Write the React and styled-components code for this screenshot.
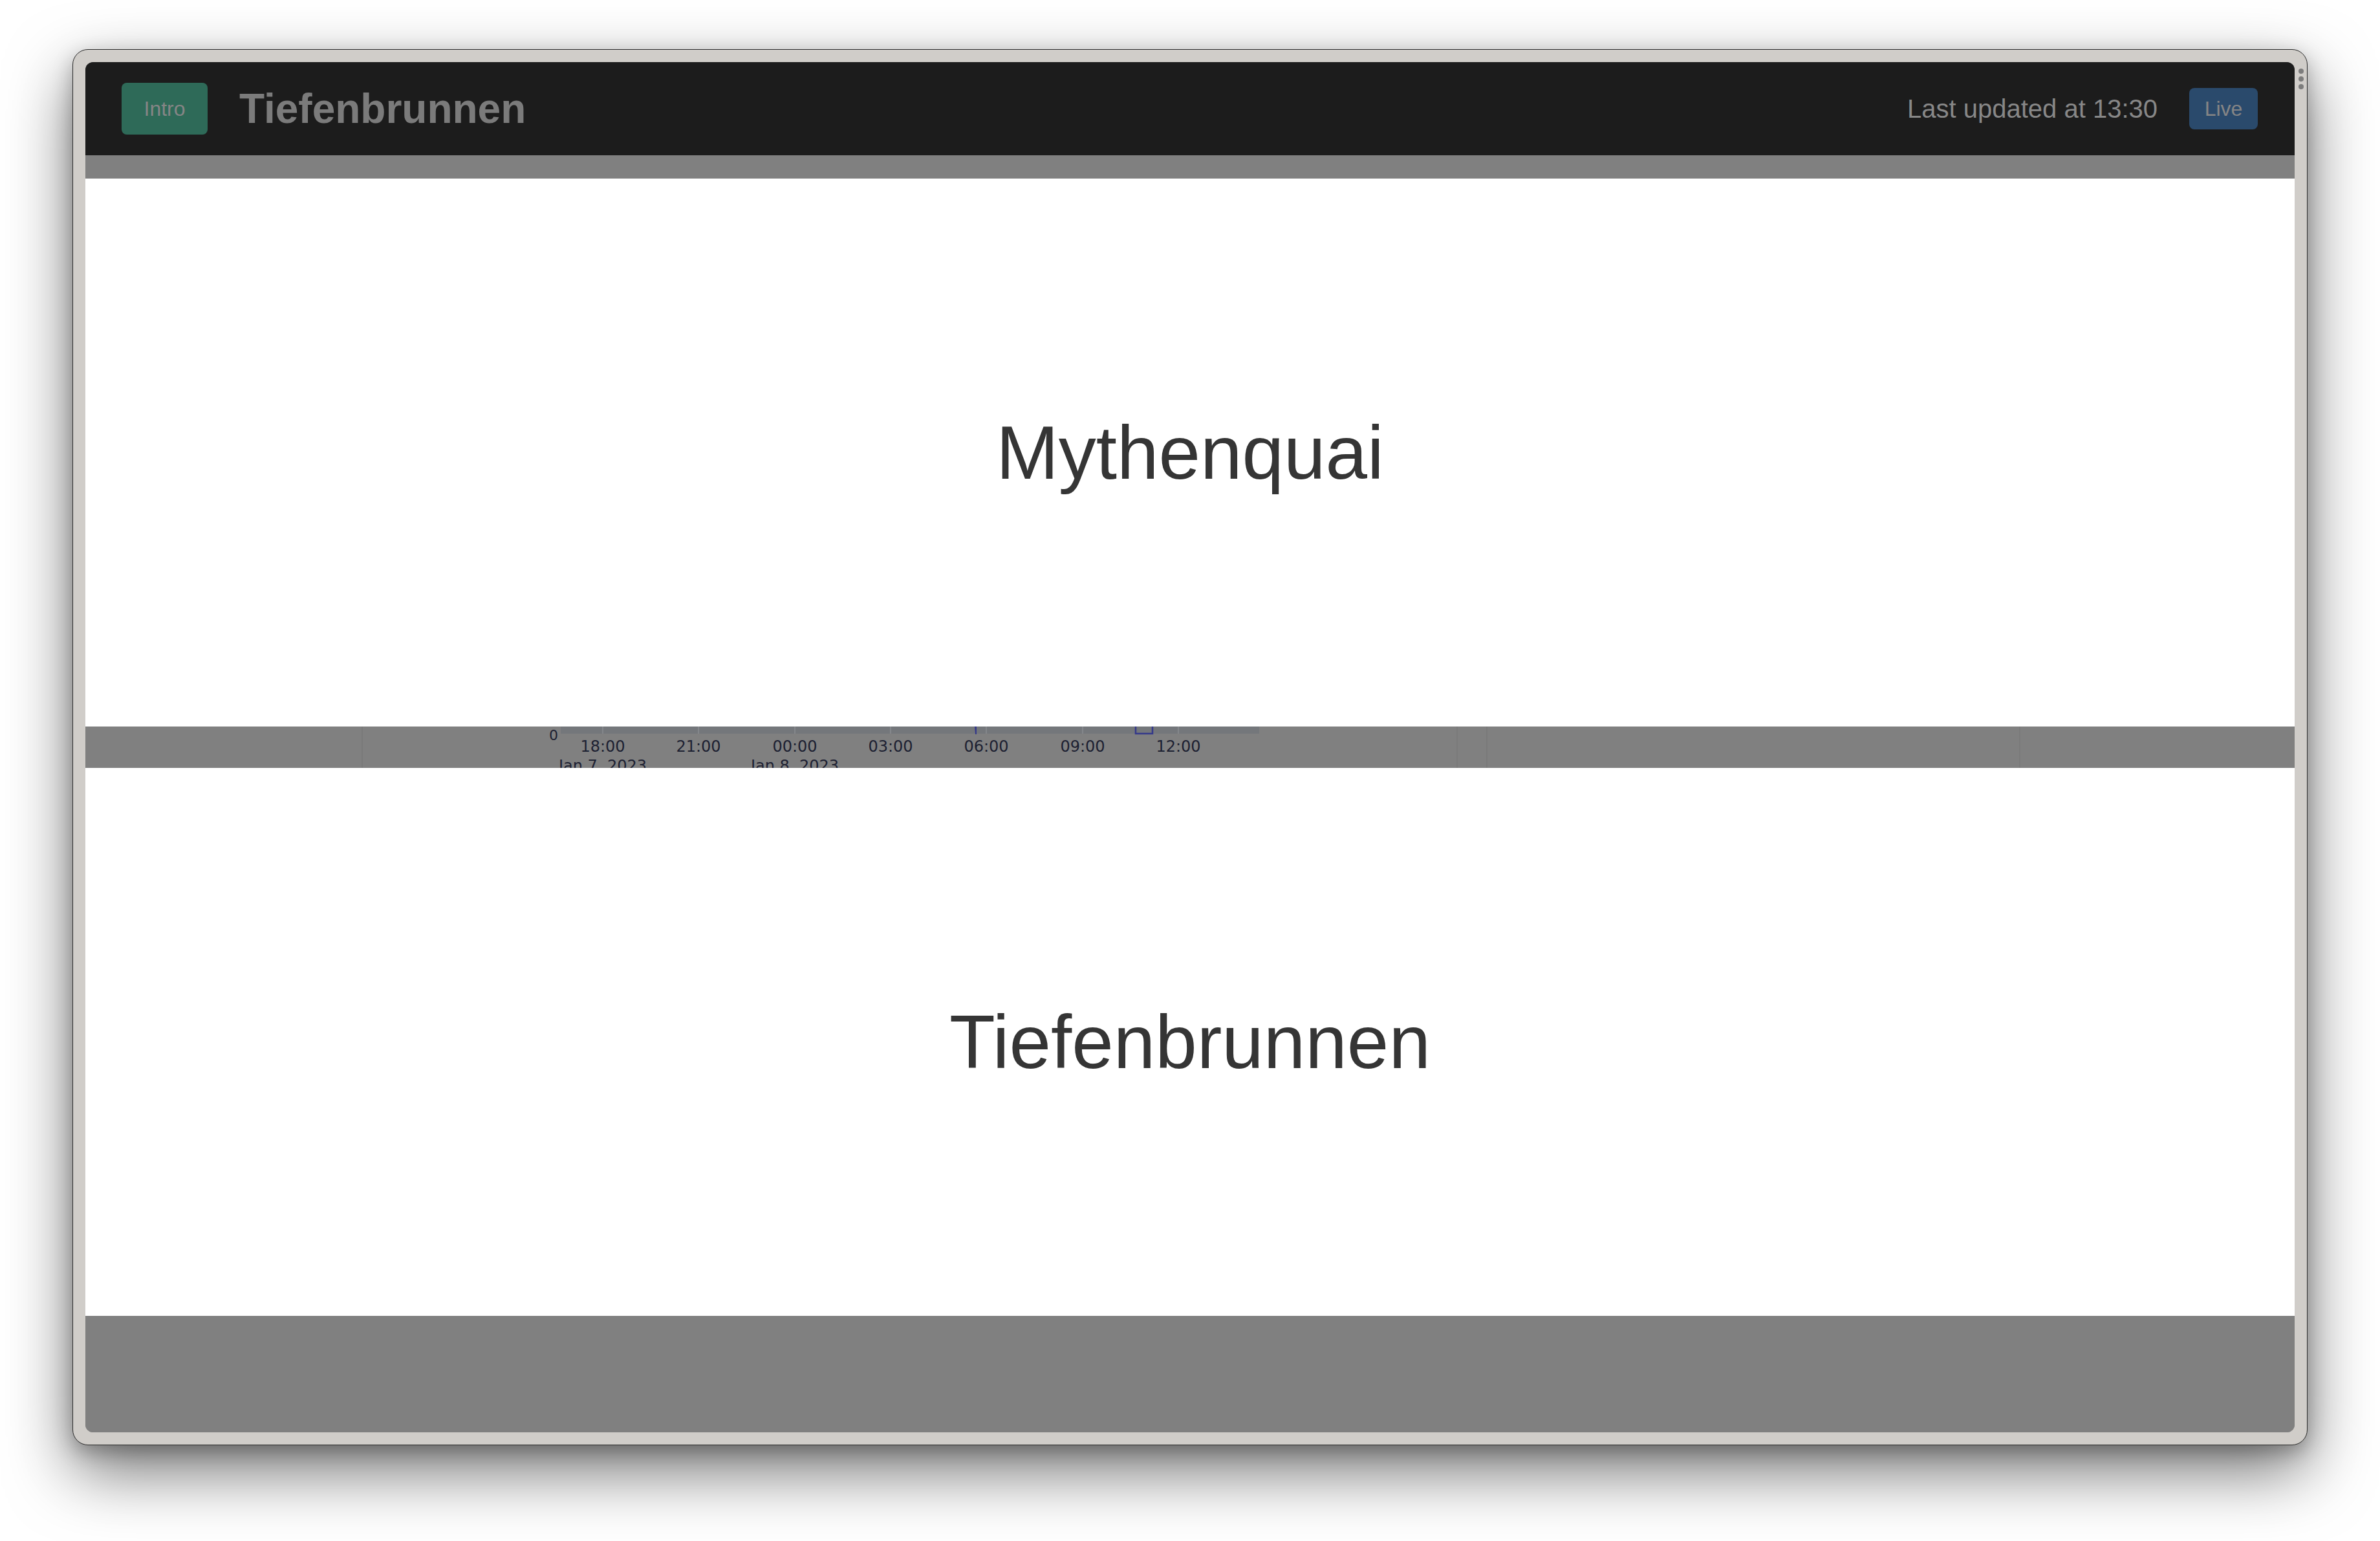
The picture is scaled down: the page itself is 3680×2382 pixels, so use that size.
import React from "react";
import styled, { createGlobalStyle } from "styled-components";

const Global = createGlobalStyle`
  html, body { margin: 0; padding: 0; background: #ffffff; }
  body { font-family: "Liberation Sans", Arial, sans-serif; }
  * { box-sizing: border-box; }
`;

const Stage = styled.div`
  width: 3680px;
  height: 2382px;
  padding: 76px 0 0 112px;
  overflow: hidden;
  background: #ffffff;
`;

const Window = styled.div`
  position: relative;
  width: 3456px;
  height: 2158px;
  padding: 19px;
  background: #d0cdc9;
  border: 1px solid #2a2a2a;
  border-radius: 24px;
  box-shadow: 0 40px 100px rgba(0, 0, 0, 0.55), 0 10px 30px rgba(0, 0, 0, 0.25);
`;

const Grip = styled.div`
  position: absolute;
  top: 29px;
  right: 5px;
  display: flex;
  flex-direction: column;
  gap: 4px;
`;

const GripDot = styled.span`
  width: 8px;
  height: 8px;
  border-radius: 50%;
  background: #7c7c7c;
`;

const Screen = styled.div`
  height: 100%;
  display: flex;
  flex-direction: column;
  border-radius: 12px;
  overflow: hidden;
  background: #808080;
`;

const Header = styled.header`
  flex: 0 0 144px;
  display: flex;
  align-items: center;
  padding: 0 57px 0 56px;
  background: #1c1c1c;
`;

const Button = styled.div`
  display: flex;
  align-items: center;
  justify-content: center;
  height: ${(p) => p.$h}px;
  width: ${(p) => p.$w}px;
  border-radius: 8px;
  background: ${(p) => p.$bg};
  color: #858585;
  font-size: 32px;
`;

const Title = styled.h1`
  margin: 0 0 0 49px;
  font-size: 64px;
  font-weight: 700;
  color: #7b7b7b;
  letter-spacing: 0;
`;

const Spacer = styled.div`
  flex: 1;
`;

const Updated = styled.span`
  font-size: 40px;
  color: #878787;
  margin-right: 49px;
`;

const DimStrip = styled.div`
  flex: 0 0 ${(p) => p.$h}px;
  background: #808080;
  overflow: hidden;
`;

const Panel = styled.section`
  flex: 0 0 847px;
  display: flex;
  align-items: center;
  justify-content: center;
  background: #ffffff;
`;

const PanelTitle = styled.h2`
  margin: 0;
  font-size: 116px;
  font-weight: 400;
  color: #353535;
  line-height: 1;
`;

const CardRow = styled.div`
  height: 100%;
  display: flex;
  padding-left: 427px;
  gap: 44px;
`;

const Card = styled.div`
  width: ${(p) => p.$w}px;
  height: 100%;
  border-left: 2px solid #7a7a7a;
  border-right: 2px solid #7a7a7a;
  padding-left: ${(p) => p.$pad || 0}px;
`;

const ChartSvg = styled.svg`
  display: block;
  font-family: "DejaVu Sans", sans-serif;
`;

const ticks = [
  { x: 92, label: "18:00" },
  { x: 240, label: "21:00" },
  { x: 389, label: "00:00" },
  { x: 537, label: "03:00" },
  { x: 685, label: "06:00" },
  { x: 834, label: "09:00" },
  { x: 982, label: "12:00" },
];

function ChartFragment() {
  return (
    <ChartSvg width="1120" height="64" viewBox="0 0 1120 64">
      <rect x="27" y="0" width="1080" height="11" fill="#74777b" />
      {ticks.map((t) => (
        <line key={t.label} x1={t.x} x2={t.x} y1="0" y2="11" stroke="#84878b" strokeWidth="2" />
      ))}
      <path d="M667 0 L670 0 L670 12 L668 12 Z" fill="#35398a" />
      <rect x="916" y="-4" width="26" height="15" fill="none" stroke="#35398a" strokeWidth="2.5" />
      <text x="23" y="21" fontSize="22" fill="#1d2132" textAnchor="end">0</text>
      {ticks.map((t) => (
        <text key={t.label + "l"} x={t.x} y="39" fontSize="24" fill="#1d2132" textAnchor="middle">
          {t.label}
        </text>
      ))}
      <text x="92" y="69" fontSize="24" fill="#1d2132" textAnchor="middle">Jan 7, 2023</text>
      <text x="389" y="69" fontSize="24" fill="#1d2132" textAnchor="middle">Jan 8, 2023</text>
    </ChartSvg>
  );
}

export default function App() {
  return (
    <>
      <Global />
      <Stage>
        <Window>
          <Grip>
            <GripDot />
            <GripDot />
            <GripDot />
          </Grip>
          <Screen>
            <Header>
              <Button $w={133} $h={80} $bg="#2e6a58">Intro</Button>
              <Title>Tiefenbrunnen</Title>
              <Spacer />
              <Updated>Last updated at 13:30</Updated>
              <Button $w={106} $h={64} $bg="#2a4a6c">Live</Button>
            </Header>
            <DimStrip $h={36} />
            <Panel>
              <PanelTitle>Mythenquai</PanelTitle>
            </Panel>
            <DimStrip $h={64}>
              <CardRow>
                <Card $w={1695} $pad={279}>
                  <ChartFragment />
                </Card>
                <Card $w={826} />
              </CardRow>
            </DimStrip>
            <Panel>
              <PanelTitle>Tiefenbrunnen</PanelTitle>
            </Panel>
            <DimStrip $h={180} />
          </Screen>
        </Window>
      </Stage>
    </>
  );
}
